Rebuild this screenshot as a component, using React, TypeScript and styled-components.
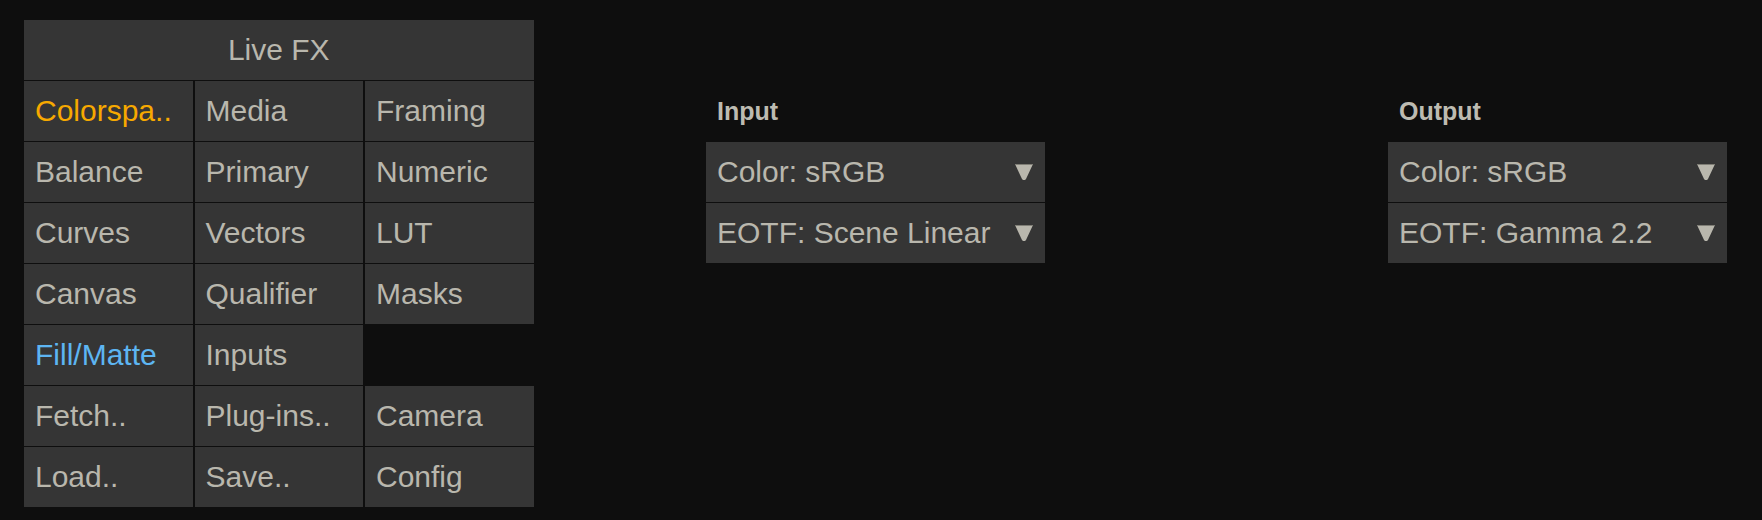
import styled, {createGlobalStyle} from 'styled-components';

const GlobalStyle = createGlobalStyle`
	html, body {
		margin: 0;
		padding: 0;
		background: #0e0e0e;
	}
	body {
		font-family: 'Liberation Sans', Arial, sans-serif;
	}
`;

const Page = styled.div`
	display: grid;
	grid-template-columns: repeat(10, 1fr);
	column-gap: 2px;
	width: 1703px;
	padding: 20px 0 0 24px;
	align-items: start;
`;

const Panel = styled.div`
	grid-column: 1 / span 3;
	display: grid;
	grid-template-columns: repeat(3, 1fr);
	grid-auto-rows: 60px;
	column-gap: 2px;
	row-gap: 1px;
`;

const Header = styled.div`
	grid-column: 1 / -1;
	display: flex;
	align-items: center;
	justify-content: center;
	background: #353535;
	color: #b9b7ad;
	font-size: 30px;
`;

const Cell = styled.div<{$tone?: 'active' | 'link'}>`
	display: flex;
	align-items: center;
	padding-left: 11px;
	background: #353535;
	font-size: 30px;
	white-space: nowrap;
	color: ${({$tone}) =>
		$tone === 'active' ? '#f7a900' : $tone === 'link' ? '#5db5f2' : '#b9b7ad'};
`;

const Blank = styled.div`
	background: #0e0e0e;
`;

const Section = styled.div<{$col: number}>`
	grid-column: ${({$col}) => $col} / span 2;
	display: grid;
	grid-auto-rows: 60px;
	row-gap: 1px;
	padding-top: 61px;
`;

const Label = styled.div`
	display: flex;
	align-items: center;
	padding: 1px 0 0 11px;
	color: #bdbbb1;
	font-size: 25px;
	font-weight: bold;
`;

const Select = styled.div`
	display: flex;
	align-items: center;
	justify-content: space-between;
	padding: 0 12px 0 11px;
	background: #353535;
	color: #b9b7ad;
	font-size: 30px;
	white-space: nowrap;
`;

const Arrow = () => (
	<svg width="18" height="16" viewBox="0 0 18 16">
		<polygon points="0,0 18,0 11,15 10,16 8,16 7,15" fill="#b9b7ad" />
		<rect x="0" y="0" width="18" height="1" fill="#7f7e76" />
	</svg>
);

const cells: {label: string; tone?: 'active' | 'link'}[][] = [
	[{label: 'Colorspa..', tone: 'active'}, {label: 'Media'}, {label: 'Framing'}],
	[{label: 'Balance'}, {label: 'Primary'}, {label: 'Numeric'}],
	[{label: 'Curves'}, {label: 'Vectors'}, {label: 'LUT'}],
	[{label: 'Canvas'}, {label: 'Qualifier'}, {label: 'Masks'}],
	[{label: 'Fill/Matte', tone: 'link'}, {label: 'Inputs'}],
	[{label: 'Fetch..'}, {label: 'Plug-ins..'}, {label: 'Camera'}],
	[{label: 'Load..'}, {label: 'Save..'}, {label: 'Config'}],
];

function App() {
	return (
		<>
			<GlobalStyle />
			<Page>
				<Panel>
					<Header>Live FX</Header>
					{cells.map((row, i) =>
						[0, 1, 2].map((j) =>
							row[j] ? (
								<Cell key={`${i}-${j}`} $tone={row[j].tone}>
									{row[j].label}
								</Cell>
							) : (
								<Blank key={`${i}-${j}`} />
							)
						)
					)}
				</Panel>
				<Section $col={5}>
					<Label>Input</Label>
					<Select>
						Color: sRGB
						<Arrow />
					</Select>
					<Select>
						EOTF: Scene Linear
						<Arrow />
					</Select>
				</Section>
				<Section $col={9}>
					<Label>Output</Label>
					<Select>
						Color: sRGB
						<Arrow />
					</Select>
					<Select>
						EOTF: Gamma 2.2
						<Arrow />
					</Select>
				</Section>
			</Page>
		</>
	);
}

export default App;
